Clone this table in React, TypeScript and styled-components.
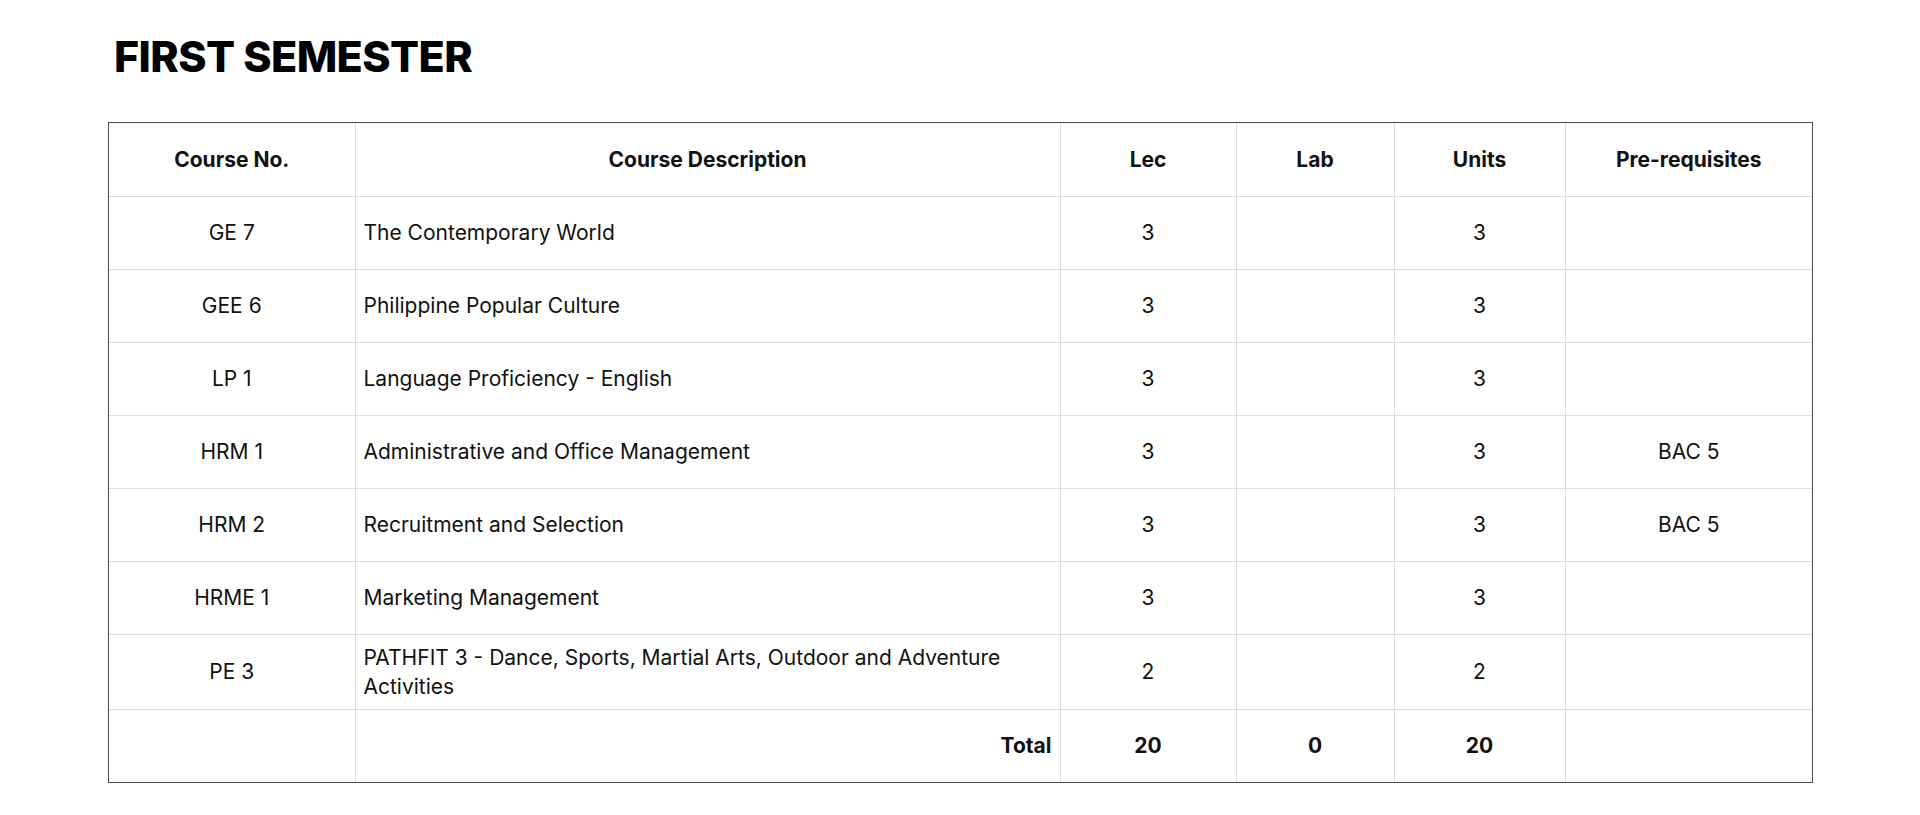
import React from "react";
import styled, { createGlobalStyle } from "styled-components";

const GlobalStyle = createGlobalStyle`
  html, body {
    margin: 0;
    padding: 0;
    background: #ffffff;
  }
  body {
    font-family: Inter, "Liberation Sans", sans-serif;
    color: #000000;
  }
`;

const Page = styled.div`
  padding: 24px 0 0 108px;
  width: 1705px;
`;

const Title = styled.h1`
  margin: 0 0 0 6px;
  font-family: Inter, "Liberation Sans", sans-serif;
  font-weight: 800;
  font-size: 43px;
  line-height: 64px;
  letter-spacing: -0.6px;
  color: #000000;
`;

const Frame = styled.div`
  margin-top: 34px;
  border: 1px solid #4a4a4a;
`;

const Table = styled.table`
  width: 100%;
  border-collapse: collapse;
  border-style: hidden;
  table-layout: fixed;
  font-family: Inter, "Liberation Sans", sans-serif;
  font-size: 21px;
  color: #111111;
`;

const Row = styled.tr`
  height: 73px;
`;

const Cell = styled.td<{ $align?: "left" | "center" | "right"; $bold?: boolean }>`
  border: 1px solid #dcdcdc;
  padding: 8px 8px;
  line-height: 29px;
  text-align: ${(p) => p.$align ?? "center"};
  font-weight: ${(p) => (p.$bold ? 700 : 400)};
  vertical-align: middle;
`;

const HeadCell = styled.th`
  border: 1px solid #dcdcdc;
  padding: 8px 8px;
  line-height: 29px;
  font-weight: 700;
  text-align: center;
`;

type Course = {
  code: string;
  desc: string;
  lec: string;
  lab: string;
  units: string;
  prereq: string;
};

const courses: Course[] = [
  { code: "GE 7", desc: "The Contemporary World", lec: "3", lab: "", units: "3", prereq: "" },
  { code: "GEE 6", desc: "Philippine Popular Culture", lec: "3", lab: "", units: "3", prereq: "" },
  { code: "LP 1", desc: "Language Proficiency - English", lec: "3", lab: "", units: "3", prereq: "" },
  { code: "HRM 1", desc: "Administrative and Office Management", lec: "3", lab: "", units: "3", prereq: "BAC 5" },
  { code: "HRM 2", desc: "Recruitment and Selection", lec: "3", lab: "", units: "3", prereq: "BAC 5" },
  { code: "HRME 1", desc: "Marketing Management", lec: "3", lab: "", units: "3", prereq: "" },
  {
    code: "PE 3",
    desc: "PATHFIT 3 - Dance, Sports, Martial Arts, Outdoor and Adventure Activities",
    lec: "2",
    lab: "",
    units: "2",
    prereq: "",
  },
];

const widths = [246, 705, 176, 158, 171, 247];

export default function App() {
  return (
    <>
      <GlobalStyle />
      <Page>
        <Title>FIRST SEMESTER</Title>
        <Frame>
          <Table>
            <colgroup>
              {widths.map((w, i) => (
                <col key={i} style={{ width: w }} />
              ))}
            </colgroup>
            <thead>
              <Row>
                <HeadCell>Course No.</HeadCell>
                <HeadCell>Course Description</HeadCell>
                <HeadCell>Lec</HeadCell>
                <HeadCell>Lab</HeadCell>
                <HeadCell>Units</HeadCell>
                <HeadCell>Pre-requisites</HeadCell>
              </Row>
            </thead>
            <tbody>
              {courses.map((c) => (
                <Row key={c.code}>
                  <Cell>{c.code}</Cell>
                  <Cell $align="left">{c.desc}</Cell>
                  <Cell>{c.lec}</Cell>
                  <Cell>{c.lab}</Cell>
                  <Cell>{c.units}</Cell>
                  <Cell>{c.prereq}</Cell>
                </Row>
              ))}
              <Row>
                <Cell />
                <Cell $align="right" $bold>
                  Total
                </Cell>
                <Cell $bold>20</Cell>
                <Cell $bold>0</Cell>
                <Cell $bold>20</Cell>
                <Cell />
              </Row>
            </tbody>
          </Table>
        </Frame>
      </Page>
    </>
  );
}
